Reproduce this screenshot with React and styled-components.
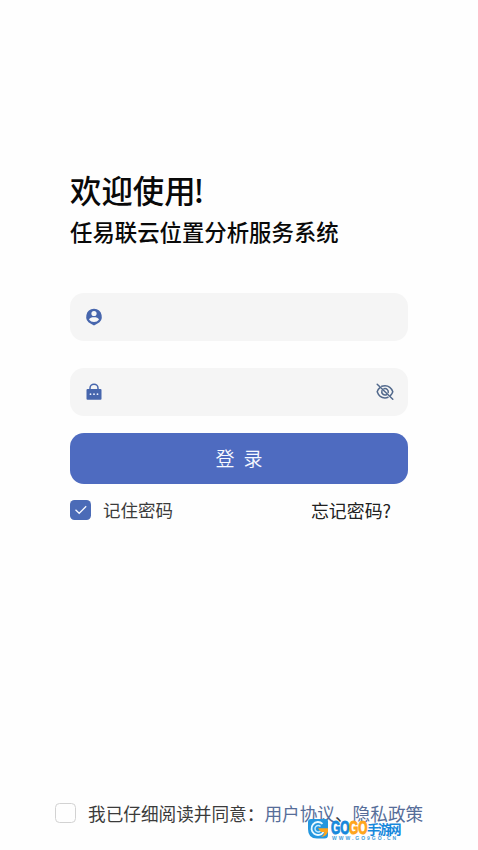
import React from "react";
import styled, { createGlobalStyle } from "styled-components";

const GlobalStyle = createGlobalStyle`
  * { box-sizing: border-box; }
  body {
    margin: 0;
    background: #fefefe;
    font-family: "Noto Sans CJK SC", "Liberation Sans", sans-serif;
  }
  button, input { font: inherit; border: 0; outline: 0; }
`;

const Screen = styled.main`
  position: relative;
  display: flex;
  flex-direction: column;
  width: 478px;
  height: 850px;
  overflow: hidden;
  background: #fefefe;
`;

const Content = styled.div`
  display: flex;
  flex-direction: column;
  width: 338px;
  margin: 167px 0 0 70px;
`;

const Title = styled.h1`
  margin: 0;
  font-size: 31.4px;
  line-height: 46px;
  font-weight: 500;
  color: #090909;
  white-space: nowrap;
`;

const Exclamation = styled.span`
  margin-left: -2px;
`;

const Subtitle = styled.h2`
  margin: 2px 0 0;
  font-size: 22.4px;
  line-height: 32px;
  font-weight: 500;
  color: #090909;
  white-space: nowrap;
`;

const Form = styled.form`
  display: flex;
  flex-direction: column;
  margin-top: 46px;
`;

const Field = styled.label`
  display: flex;
  align-items: center;
  height: 48px;
  padding: 0 14px 0 15px;
  margin-bottom: ${(p) => p.$gap}px;
  border-radius: 14px;
  background: #f5f5f5;
  color: #4766ad;
  svg { flex: none; display: block; }
`;

const Input = styled.input`
  flex: 1;
  min-width: 0;
  height: 100%;
  padding: 0 12px;
  background: transparent;
  font-size: 17px;
`;

const LoginButton = styled.button`
  height: 51px;
  padding: 0 0 1px;
  border-radius: 14px;
  background: #4e6bc0;
  color: #f7f9ff;
  font-size: 19px;
  line-height: 28px;
  font-weight: 350;
  word-spacing: 5px;
`;

const Options = styled.div`
  display: flex;
  align-items: center;
  height: 22px;
  margin-top: 15px;
  font-size: 17.5px;
  line-height: 22px;
`;

const Checkbox = styled.span`
  flex: none;
  display: grid;
  place-items: center;
  width: 21px;
  height: 20px;
  border-radius: 4.5px;
  background: ${(p) => (p.$checked ? "#4b6bb7" : "#fefefe")};
  border: ${(p) => (p.$checked ? "0" : "1.5px solid #d2d2d2")};
`;

const Remember = styled.span`
  margin-left: 12px;
  color: #3b3b3b;
`;

const Forgot = styled.span`
  margin-left: auto;
  margin-right: 17px;
  padding-bottom: 1px;
  font-size: 17.9px;
  color: #202020;
`;

const Agreement = styled.div`
  display: flex;
  align-items: center;
  height: 26px;
  margin: auto 0 24px 55px;
  font-size: 17.65px;
  line-height: 26px;
  color: #3b3b3b;
  white-space: nowrap;
`;

const AgreementText = styled.span`
  margin-left: 12px;
  padding-top: 1px;
`;

const PolicyLink = styled.span`
  color: #566d99;
`;

const Watermark = styled.div`
  position: absolute;
  left: 307px;
  top: 818px;
  display: flex;
  gap: 2px;
  height: 24px;
`;

const Brand = styled.div`
  display: flex;
  flex-direction: column;
`;

const BrandName = styled.div`
  display: flex;
  align-items: center;
  height: 18px;
  padding-top: 2px;
  white-space: nowrap;
`;

const BrandLatin = styled.span`
  width: 18px;
  color: ${(p) => p.$color};
  -webkit-text-stroke: 1px ${(p) => p.$color};
  font: 700 18px/18px "Liberation Sans", sans-serif;
  transform: scaleX(0.66);
  transform-origin: left;
`;

const BrandChinese = styled.span`
  color: #1688dc;
  font-size: 13px;
  line-height: 17px;
  font-weight: 700;
  letter-spacing: -2.2px;
  text-shadow: 0 0 1px #fff;
`;

const BrandUrl = styled.div`
  margin-left: 1px;
  color: #3e9cd9;
  font: 700 5px/5px "Liberation Sans", sans-serif;
  letter-spacing: 2px;
  white-space: nowrap;
`;

function UserIcon() {
  return (
    <svg width="18" height="18" viewBox="0 0 18 18">
      <path d="M9 .7a7.9 7.9 0 0 0-3.1 15.1L9 17.5l3.1-1.7A7.9 7.9 0 0 0 9 .7Z" fill="currentColor" />
      <circle cx="9" cy="5.5" r="2.6" fill="#f8f8f8" />
      <path d="M4 11.5c.6-1.8 2.8-2.3 5-2.3s4.4.5 5 2.3c-1.2 1.7-3 2.5-5 2.5s-3.8-.8-5-2.5Z" fill="#f8f8f8" />
    </svg>
  );
}

function LockIcon() {
  return (
    <svg width="18" height="18" viewBox="0 0 18 18">
      <path d="M5 7V5.2a4 4 0 0 1 8 0V7" fill="none" stroke="currentColor" strokeWidth="1.5" />
      <rect x="1.5" y="6" width="15" height="10.7" rx="1" fill="currentColor" />
      <g fill="#eef2ff">
        <circle cx="5.5" cy="11.2" r="0.9" />
        <circle cx="9" cy="11.2" r="0.9" />
        <circle cx="12.5" cy="11.2" r="0.9" />
      </g>
    </svg>
  );
}

function HiddenIcon() {
  return (
    <svg width="18" height="18" viewBox="0 0 18 18" fill="none" stroke="#52698c" strokeWidth="1.5" strokeLinecap="round">
      <path d="M5.7 3.3C6.7 2.9 7.8 2.7 9 2.7c3.8 0 6.5 2.3 7.8 6.1-.5 1.5-1.3 2.8-2.4 3.8M12 14.3c-.9.4-1.900.6-3 .6-3.800 0-6.500-2.300-7.800-6.100.5-1.600 1.300-2.900 2.500-3.900" />
      <path d="M8 5.7a3.3 3.3 0 0 1 4.2 3.9M10.5 11.7a3.3 3.3 0 0 1-4.5-4.2" />
      <path d="m1.2 1.3 15.6 15" />
    </svg>
  );
}

function CheckIcon() {
  return (
    <svg width="14" height="12" viewBox="0 0 14 12">
      <path d="m1.5 5.8 3.7 3.5 7-7" fill="none" stroke="#f7f9ff" strokeWidth="1.3" />
    </svg>
  );
}

function BrandIcon() {
  return (
    <svg width="22" height="22" viewBox="0 0 22 22">
      <path d="M4 1h14.500Q21 1 21 3.500V17q0 3.500-3.500 3.500H10Q1 20.500 1 11V4Q1 1 4 1Z" fill="#2497df" />
      <path d="M15.500 5.800A6.500 6.500 0 1 0 16.500 14" fill="none" stroke="#e9f9ff" strokeWidth="1.800" />
      <path d="M13.500 8.500A3.200 3.200 0 1 0 13.500 13" fill="none" stroke="#bfe9ff" strokeWidth="1.500" />
      <path d="M11 10.200H21v3.300c-1 3.500-3.500 5.200-7 5.600 2-1.200 3.100-2.700 3.500-5H14Z" fill="#ffa51c" />
    </svg>
  );
}

export default function App() {
  return (
    <>
      <GlobalStyle />
      <Screen>
        <Content>
          <Title>欢迎使用<Exclamation>!</Exclamation></Title>
          <Subtitle>任易联云位置分析服务系统</Subtitle>
          <Form>
            <Field $gap={27}>
              <UserIcon />
              <Input aria-label="用户名" />
            </Field>
            <Field $gap={17}>
              <LockIcon />
              <Input type="password" aria-label="密码" />
              <HiddenIcon />
            </Field>
            <LoginButton type="button">登 录</LoginButton>
          </Form>
          <Options>
            <Checkbox $checked><CheckIcon /></Checkbox>
            <Remember>记住密码</Remember>
            <Forgot>忘记密码?</Forgot>
          </Options>
        </Content>
        <Agreement>
          <Checkbox />
          <AgreementText>
            我已仔细阅读并同意：<PolicyLink>用户协议</PolicyLink>、<PolicyLink>隐私政策</PolicyLink>
          </AgreementText>
        </Agreement>
        <Watermark>
          <BrandIcon />
          <Brand>
            <BrandName>
              <BrandLatin $color="#1688dc">GO</BrandLatin>
              <BrandLatin $color="#ffa51c">GO</BrandLatin>
              <BrandChinese>手游网</BrandChinese>
            </BrandName>
            <BrandUrl>WWW.GO9GO.CN</BrandUrl>
          </Brand>
        </Watermark>
      </Screen>
    </>
  );
}
